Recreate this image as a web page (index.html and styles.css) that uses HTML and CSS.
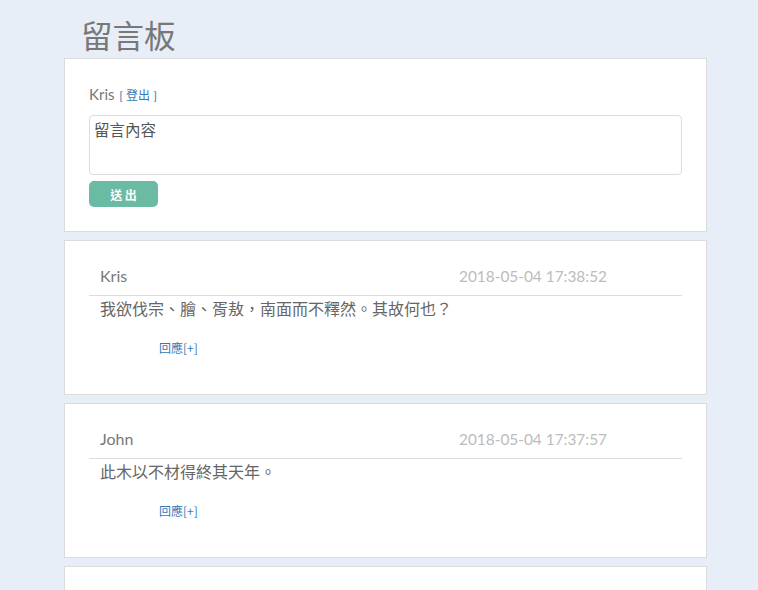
FILE: index.html
```html
<!DOCTYPE html>
<html lang="zh-Hant">
<head>
<meta charset="utf-8">
<title>留言板</title>
<link rel="stylesheet" href="styles.css">
</head>
<body>
<div class="wrap">
  <h1 class="title">留言板</h1>
  <div class="card compose">
    <div class="user">Kris <span class="logout">[ <a href="#">登出</a> ]</span></div>
    <div class="textarea">留言內容</div>
    <button class="send">送 出</button>
  </div>

  <div class="card msg">
    <div class="msg-head">
      <span class="name">Kris</span>
      <span class="date">2018-05-04 17:38:52</span>
    </div>
    <div class="msg-body">我欲伐宗、膾、胥敖，南面而不釋然。其故何也？</div>
    <a class="reply" href="#">回應[+]</a>
  </div>

  <div class="card msg">
    <div class="msg-head">
      <span class="name">John</span>
      <span class="date">2018-05-04 17:37:57</span>
    </div>
    <div class="msg-body">此木以不材得終其天年。</div>
    <a class="reply" href="#">回應[+]</a>
  </div>

  <div class="card msg"></div>
</div>
</body>
</html>
```

FILE: styles.css
```css
html, body {
  margin: 0;
  padding: 0;
  background: #e8eef7;
  font-family: Lato, "Noto Sans CJK TC", sans-serif;
  overflow: hidden;
}
.wrap {
  width: 643px;
  margin-left: 64px;
}
.title {
  margin: 16px 0 6px 17px;
  font-size: 31.5px;
  line-height: 36px;
  font-weight: 400;
  color: #787878;
  font-family: "Noto Sans CJK TC", sans-serif;
}
.card {
  background: #fff;
  border: 1px solid #dcdcdc;
  margin-bottom: 8px;
  box-sizing: border-box;
}
.compose {
  height: 174px;
  padding: 25px 24px 0 24px;
}
.user {
  height: 20px;
  font-size: 15px;
  line-height: 20px;
  color: #777;
  overflow: hidden;
}
.logout {
  font-size: 12px;
  line-height: 12px;
  color: #337ab7;
  margin-left: 1px;
}
.logout a {
  color: #337ab7;
  text-decoration: none;
  font-family: "Noto Sans CJK TC", sans-serif;
}
.textarea {
  margin-top: 11px;
  border: 1px solid #ddd;
  border-radius: 4px;
  padding: 2px 4px;
  box-sizing: border-box;
  height: 60px;
  font-family: "Noto Sans CJK TC", sans-serif;
  font-size: 15.5px;
  line-height: 22px;
  color: #555;
}
.send {
  margin-top: 6px;
  display: block;
  width: 69px;
  height: 26px;
  background: #6bbaa3;
  border: none;
  border-radius: 5px;
  color: #fff;
  font-weight: 700;
  font-size: 12px;
  font-family: "Noto Sans CJK TC", sans-serif;
  padding: 0;
}
.msg {
  height: 155px;
  padding: 24px 24px 0 24px;
}
.msg-head {
  display: flex;
  justify-content: space-between;
  align-items: baseline;
  padding: 0 75px 8px 11px;
  border-bottom: 1px solid #ddd;
  line-height: 22px;
  height: 22px;
}
.name {
  color: #777;
  font-size: 16px;
}
.date {
  color: #bcbcbc;
  font-size: 15.4px;
}
.msg-body {
  margin-top: 1px;
  padding-left: 11px;
  font-family: "Noto Sans CJK TC", sans-serif;
  font-size: 16px;
  line-height: 22px;
  color: #666;
}
.reply {
  display: inline-block;
  margin: 20px 0 0 70px;
  font-family: "Noto Sans CJK TC", sans-serif;
  font-size: 12px;
  line-height: 17px;
  color: #337ab7;
  text-decoration: none;
}
```
